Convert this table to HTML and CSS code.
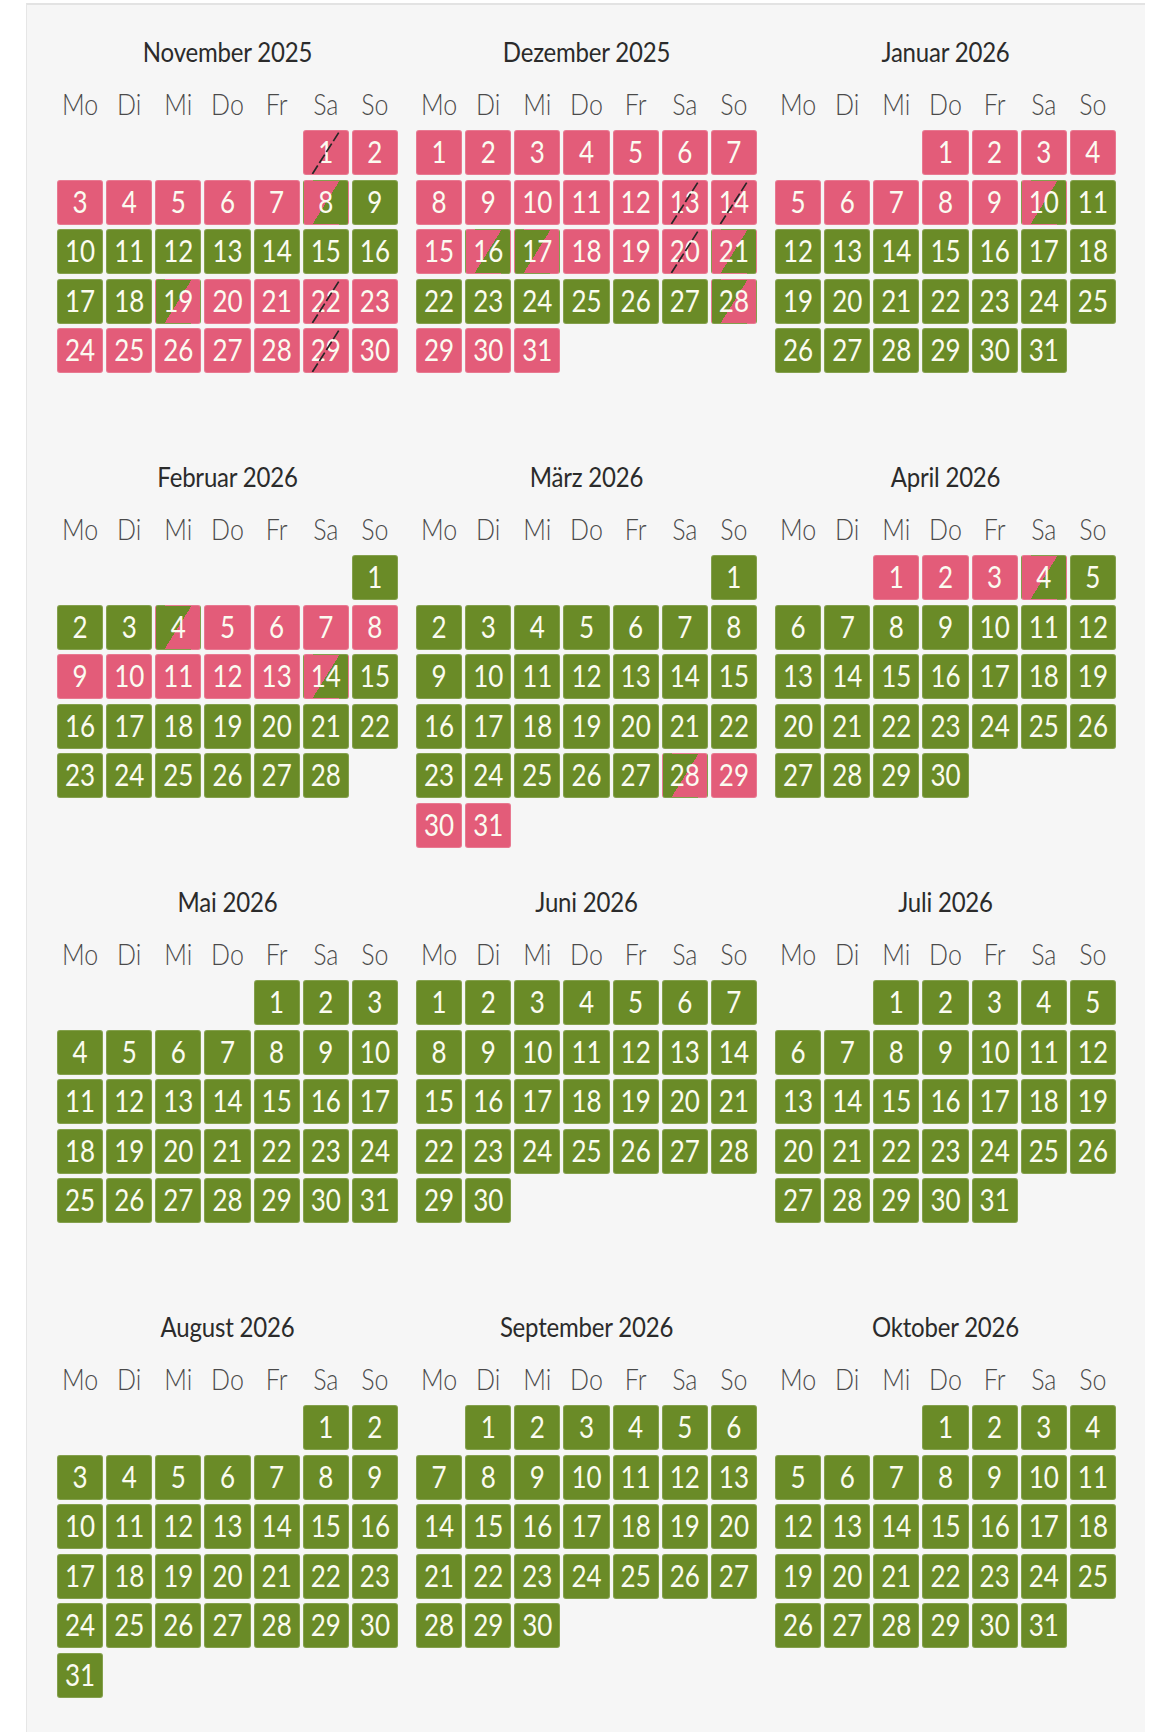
FILE: index.html
```html
<!DOCTYPE html>
<html lang="de">
<head>
<meta charset="utf-8">
<title>Belegungskalender</title>
<link rel="stylesheet" href="styles.css">
</head>
<body>
<main class="panel">
  <div class="months" id="months"></div>
</main>
<script src="script.js"></script>
</body>
</html>
```

FILE: styles.css
```css
html, body {
  margin: 0;
  padding: 0;
  background: #ffffff;
}

body {
  font-family: "Lato", "Open Sans", "Liberation Sans", sans-serif;
  width: 1170px;
  height: 1732px;
  overflow: hidden;
}

.panel {
  box-sizing: border-box;
  margin: 3px 0 0 26px;
  width: 1119px;
  height: 1729px;
  background: #f6f6f6;
  border-top: 2px solid #e3e3e3;
  border-left: 1px solid #e6e6e6;
  padding: 32px 0 0 30px;
}

.months {
  display: grid;
  grid-template-columns: repeat(3, 341px);
  grid-auto-rows: 425px;
  column-gap: 18px;
}

.month {
  display: flex;
  flex-direction: column;
}

.title {
  margin: 0;
  height: 30px;
  font-size: 24px;
  line-height: 30px;
  font-weight: 400;
  color: #2b2b2b;
  text-align: center;
  letter-spacing: -0.2px;
}

.weekdays {
  margin-top: 21px;
  display: grid;
  grid-template-columns: repeat(7, 1fr);
  column-gap: 3px;
  height: 30px;
  font-size: 25px;
  line-height: 30px;
  font-weight: 300;
  color: #4a4a4a;
  text-align: center;
}

.stretch {
  display: inline-block;
  transform: scaleY(1.15);
}

.days {
  margin-top: 12px;
  display: grid;
  grid-template-columns: repeat(7, 1fr);
  grid-auto-rows: 45px;
  column-gap: 3px;
  row-gap: 4.6px;
}

.day {
  position: relative;
  box-sizing: border-box;
  border-radius: 3px;
  border: 1px solid rgba(255, 255, 255, 0.18);
  color: #fbfbf0;
  font-size: 26px;
  line-height: 43px;
  text-align: center;
  overflow: hidden;
}

.day .num {
  display: inline-block;
  transform: scaleY(1.15);
}

.booked { background: #e35c79; }
.free { background: #6a8b27; }
.booked-free { background: linear-gradient(122deg, #e35c79 50%, #6a8b27 50%); }
.free-booked { background: linear-gradient(122deg, #6a8b27 50%, #e35c79 50%); }

.start-1 { grid-column-start: 1; }
.start-2 { grid-column-start: 2; }
.start-3 { grid-column-start: 3; }
.start-4 { grid-column-start: 4; }
.start-5 { grid-column-start: 5; }
.start-6 { grid-column-start: 6; }
.start-7 { grid-column-start: 7; }

.slash {
  position: absolute;
  left: 0;
  top: 0;
  width: 100%;
  height: 100%;
  pointer-events: none;
}

.slash line {
  stroke: #262626;
  stroke-width: 1.7;
  stroke-dasharray: 10 3;
  vector-effect: non-scaling-stroke;
}
```

FILE: script.js
```js
(function () {
  var months = [
    { name: "November 2025", start: 6, len: 30,
      ranges: [[1, 7, "b"], [8, 8, "bf"], [9, 18, "f"], [19, 19, "fb"], [20, 30, "b"]],
      slash: [1, 22, 29] },
    { name: "Dezember 2025", start: 1, len: 31,
      ranges: [[1, 15, "b"], [16, 16, "bf"], [17, 17, "fb"], [18, 20, "b"], [21, 21, "bf"], [22, 27, "f"], [28, 28, "fb"], [29, 31, "b"]],
      slash: [13, 14, 20] },
    { name: "Januar 2026", start: 4, len: 31,
      ranges: [[1, 9, "b"], [10, 10, "bf"], [11, 31, "f"]], slash: [] },
    { name: "Februar 2026", start: 7, len: 28,
      ranges: [[1, 3, "f"], [4, 4, "fb"], [5, 13, "b"], [14, 14, "bf"], [15, 28, "f"]], slash: [] },
    { name: "März 2026", start: 7, len: 31,
      ranges: [[1, 27, "f"], [28, 28, "fb"], [29, 31, "b"]], slash: [] },
    { name: "April 2026", start: 3, len: 30,
      ranges: [[1, 3, "b"], [4, 4, "bf"], [5, 30, "f"]], slash: [] },
    { name: "Mai 2026", start: 5, len: 31, ranges: [[1, 31, "f"]], slash: [] },
    { name: "Juni 2026", start: 1, len: 30, ranges: [[1, 30, "f"]], slash: [] },
    { name: "Juli 2026", start: 3, len: 31, ranges: [[1, 31, "f"]], slash: [] },
    { name: "August 2026", start: 6, len: 31, ranges: [[1, 31, "f"]], slash: [] },
    { name: "September 2026", start: 2, len: 30, ranges: [[1, 30, "f"]], slash: [] },
    { name: "Oktober 2026", start: 4, len: 31, ranges: [[1, 31, "f"]], slash: [] }
  ];
  var cls = { b: "booked", f: "free", bf: "booked-free", fb: "free-booked" };
  var wd = ["Mo", "Di", "Mi", "Do", "Fr", "Sa", "So"];
  var html = "";
  months.forEach(function (m) {
    html += '<section class="month">';
    html += '<h2 class="title"><span class="stretch">' + m.name + '</span></h2>';
    html += '<div class="weekdays">';
    wd.forEach(function (w) { html += '<span><span class="stretch">' + w + '</span></span>'; });
    html += '</div><div class="days">';
    for (var d = 1; d <= m.len; d++) {
      var s = "f";
      m.ranges.forEach(function (r) { if (d >= r[0] && d <= r[1]) s = r[2]; });
      var c = "day " + cls[s] + (d === 1 ? " start-" + m.start : "");
      html += '<div class="' + c + '"><span class="num">' + d + '</span>';
      if (m.slash.indexOf(d) >= 0) {
        html += '<svg class="slash" viewBox="0 0 100 100" preserveAspectRatio="none"><line x1="19" y1="100" x2="81" y2="0"/></svg>';
      }
      html += '</div>';
    }
    html += '</div></section>';
  });
  document.getElementById("months").innerHTML = html;
})();
```
